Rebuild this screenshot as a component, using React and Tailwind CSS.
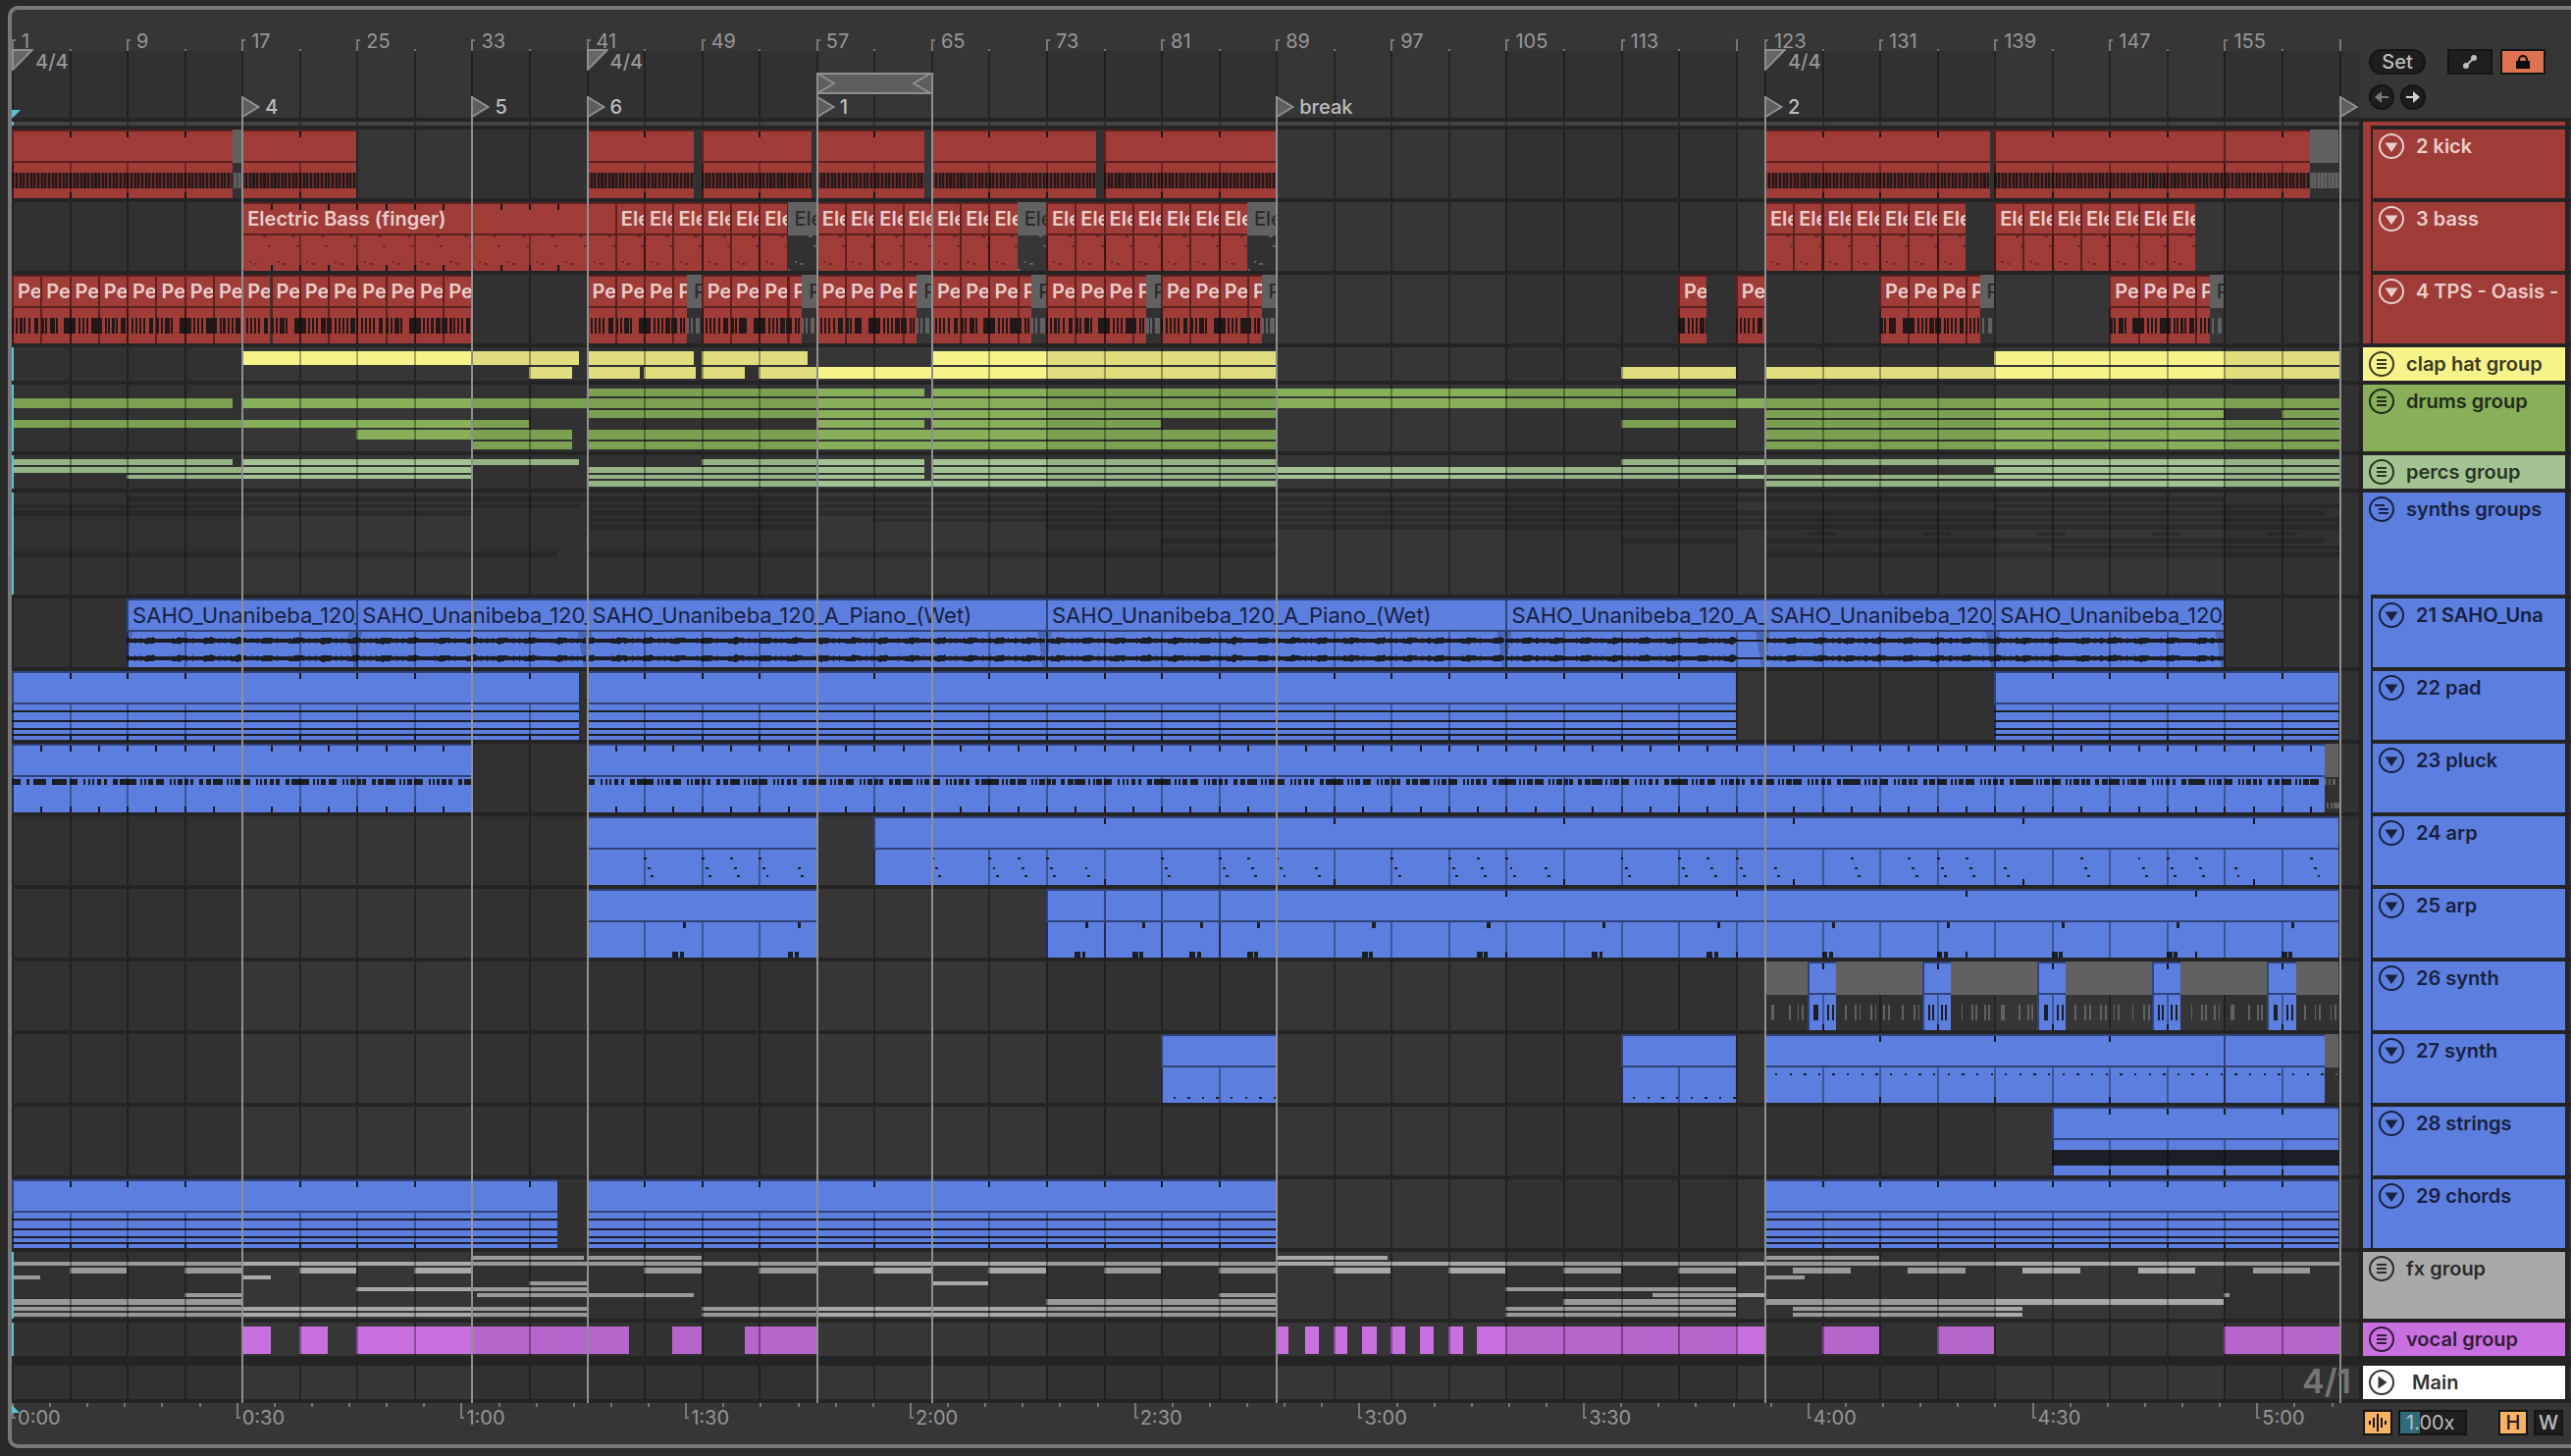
import React from 'react';

const SPAN = 163.4;
const ROW_WIDTH = 'w-[216px]';

const pct = (bars) => `${(bars / SPAN) * 100}%`;
const at = (bar) => pct(bar - 1);

const range = (from, to, step) => {
	const out = [];
	for (let i = from; i < to; i += step) out.push(i);
	return out;
};

const GRID_BARS = [...range(1, 122, 4), ...range(123, 164, 4)];
const DARK_BANDS = [[1, 17], [33, 57], [73, 89], [105, 121], [123, 139], [155, 164.4]];

const RULER_TICKS = [
	...range(1, 114, 8).map((bar) => ({ bar, label: bar })),
	{ bar: 121 },
	...range(123, 156, 8).map((bar) => ({ bar, label: bar })),
	{ bar: 163 },
];

const TIME_SIGNATURES = [1, 41, 123];

const LOCATORS = [
	{ bar: 17, label: '4' },
	{ bar: 33, label: '5' },
	{ bar: 41, label: '6' },
	{ bar: 57, label: '1' },
	{ bar: 89, label: 'break' },
	{ bar: 123, label: '2' },
	{ bar: 163, label: '' },
];

const COLORS = {
	red: { bg: 'bg-[#a03c38]', edge: 'border-[#5c2020]', text: 'text-[#e8cdcb]', note: '#231818', fill: '#a03c38' },
	blue: { bg: 'bg-[#5c7edf]', edge: 'border-[#2f437a]', text: 'text-[#172140]', note: '#1c1e26', fill: '#5c7edf' },
	yellow: { bg: 'bg-[#f7f38b]', text: 'text-[#3b3a22]', fill: '#f7f38b' },
	green: { bg: 'bg-[#88b05b]', text: 'text-[#212b16]', fill: '#88b05b' },
	sage: { bg: 'bg-[#a3c492]', text: 'text-[#2a3326]', fill: '#a3c492' },
	gray: { bg: 'bg-[#a9a9a9]', text: 'text-[#2b2b2b]', fill: '#a9a9a9' },
	violet: { bg: 'bg-[#c970e0]', text: 'text-[#331c39]', fill: '#c970e0' },
	shade: { fill: '#2c2c2c' },
};

const clip = (from, to, name = '', loop = 0, muted = false) => ({ from, to, name, loop, muted });
const chain = (from, to, name) => range(from, to, 2).map((bar) => clip(bar, Math.min(bar + 2, to), name));

// note: [bar, length, y, height]
const repeat = (pattern, from, to, period) =>
	range(from, to, period).flatMap((start) => pattern.map(([x, w, y, h]) => [start + x, w, y, h]));

const KICK_NOTES = repeat([[0.02, 0.14, 44, 16]], 1, 163, 0.25);

const BASS_NOTES = repeat(
	[[1.5, 0.26, 34, 2], [1.8, 0.2, 44, 2], [0.5, 0.14, 60, 2], [0.85, 0.26, 62, 2], [0.05, 0.14, 68, 2]],
	1, 163, 2
);

const PERC_NOTES = repeat(
	[
		[0, 0.14], [0.3, 0.14], [0.58, 0.14], [0.85, 0.14], [1.15, 0.14], [1.55, 0.3],
		[2.05, 0.2], [2.35, 0.14], [2.65, 0.35], [3.05, 0.14], [3.65, 0.82], [4.65, 0.14],
		[4.92, 0.14], [5.2, 0.14], [5.5, 0.35], [5.9, 0.4], [6.5, 0.14], [6.72, 0.14],
		[7, 0.14], [7.27, 0.14], [7.6, 0.3],
	].map(([x, w]) => [x, w, 44, 16]),
	1, 163, 8
);

const PLUCK_NOTES = [
	...repeat([[0, 0.6], [1, 0.2], [1.5, 0.9], [2.8, 1]].map(([x, w]) => [x, w, 36, 6]), 1, 5, 4),
	...repeat(
		[
			[0, 0.6], [1, 0.14], [1.3, 0.14], [1.57, 0.2], [1.95, 0.3], [2.4, 0.24], [3.05, 0.3], [3.5, 1.2],
			[4.95, 0.14], [5.22, 0.14], [5.5, 0.35], [6.05, 0.56], [7, 0.14], [7.27, 0.14], [7.55, 0.35],
			[8.05, 0.26], [8.4, 0.26], [9.05, 0.28], [9.5, 0.4], [10, 0.7], [10.95, 0.14], [11.25, 0.14], [11.5, 0.4],
		].map(([x, w]) => [x, w, 36, 6]),
		5, 162, 12
	),
	[162.15, 0.14, 60, 6], [162.4, 0.14, 60, 6], [162.65, 0.35, 60, 6],
];

const arpFigure = (x) => [[x, 0.2, 42, 2], [x + 0.28, 0.2, 52, 2], [x + 0.5, 0.2, 60, 2]];
const ARP_PATTERN = [
	...arpFigure(4), ...arpFigure(8), ...arpFigure(10), ...arpFigure(12),
	[14.7, 0.2, 52, 2], [14.9, 0.2, 60, 2],
];
const ARP24_NOTES = [...repeat(ARP_PATTERN, 41, 57, 16), ...repeat(ARP_PATTERN, 61, 163, 16)];

const stab = (x) => [[x, 0.4, 64, 6], [x + 0.5, 0.26, 64, 6], [x + 0.7, 0.22, 34, 6]];
const ARP25_NOTES = [47, 55, 75, 79, 83, 87, ...range(95, 163, 8)].flatMap(stab);

const SYNTH26_NOTES = repeat(
	[
		[0.45, 0.26], [1.7, 0.12], [2.3, 0.12], [2.6, 0.12], [3.45, 0.28], [4.35, 0.14], [4.7, 0.14],
		[5.6, 0.12], [6.3, 0.12], [6.6, 0.12], [7.4, 0.12], [7.7, 0.12], [8.3, 0.12], [8.6, 0.12],
		[9.6, 0.12], [10.4, 0.12], [10.7, 0.12], [11.4, 0.14], [11.7, 0.14], [12.3, 0.14], [12.6, 0.14],
		[13.7, 0.12], [14.4, 0.12], [14.7, 0.12], [15.3, 0.12], [15.6, 0.12],
	].map(([x, w]) => [x, w, 44, 16]),
	123, 163, 16
);

const SYNTH27_NOTES = [
	...repeat([[0.85, 0.16, 64, 2]], 81, 89, 1),
	...repeat([[0.85, 0.16, 64, 2]], 113, 121, 1),
	...repeat([[0.75, 0.16, 40, 2]], 123, 163, 1),
];

const CHORD_LINES = [40, 50, 58, 64].map((y) => [1, 163, y, 2]);

// seven bars of percussion, then one muted bar
const percPhrase = (b) => [...chain(b, b + 6, 'Pe'), clip(b + 6, b + 7, 'P'), clip(b + 7, b + 8, 'P', 0, true)];

const TRACKS = [
	{
		name: '2 kick', color: 'red', kind: 'midi', notes: KICK_NOTES, band: true,
		clips: [
			clip(1, 16.4, '', 4), clip(16.4, 17, '', 0, true), clip(17, 25, '', 4), clip(41, 48.5, '', 4),
			clip(49, 56.7, '', 4), clip(57, 64.5, '', 4), clip(65, 76.5, '', 4), clip(77, 89, '', 4),
			clip(123, 138.7, '', 4), clip(139, 155, '', 4), clip(155, 161, '', 4), clip(161, 163, '', 0, true),
		],
	},
	{
		name: '3 bass', color: 'red', kind: 'midi', notes: BASS_NOTES, noteColor: '#6b2a29',
		clips: [
			clip(17, 43, 'Electric Bass (finger)', 2), ...chain(43, 55, 'Ele'), clip(55, 57, 'Ele', 0, true),
			...chain(57, 71, 'Ele'), clip(71, 73, 'Ele', 0, true), ...chain(73, 87, 'Ele'), clip(87, 89, 'Ele', 0, true),
			...chain(123, 137, 'Ele'), ...chain(139, 153, 'Ele'),
		],
	},
	{
		name: '4 TPS - Oasis -', color: 'red', kind: 'midi', notes: PERC_NOTES,
		clips: [
			...chain(1, 33, 'Pe'), ...[41, 49, 57, 65, 73, 81].flatMap(percPhrase),
			clip(117, 119, 'Pe'), clip(121, 123, 'Pe'), ...[131, 147].flatMap(percPhrase),
		],
	},
	{
		name: 'clap hat group', color: 'yellow', kind: 'group', height: 'h-[34px]', size: 34,
		rows: [
			[4, 14, [[17, 40.5], [41, 48.5], [49, 56.4], [65, 89], [139, 163]]],
			[20, 12, [[37, 40], [41, 44.7], [45, 48.6], [49, 52], [53, 89], [113, 121], [123, 163]]],
		],
	},
	{
		name: 'drums group', color: 'green', kind: 'group', height: 'h-[68px]', size: 68,
		rows: [
			[4, 8, [[41, 64.5], [65, 121]]],
			[14, 10, [[1, 16.4], [17, 163]]],
			[26, 8, [[41, 89], [123, 155], [159, 163]]],
			[36, 8, [[1, 37], [57, 64.5], [65, 81], [113, 121], [123, 163]]],
			[46, 10, [[25, 40], [41, 89], [123, 163]]],
			[58, 8, [[33, 40], [41, 89], [123, 163]]],
		],
	},
	{
		name: 'percs group', color: 'sage', kind: 'group', height: 'h-[34px]', size: 34,
		rows: [
			[4, 6, [[1, 16.4], [17, 40.5], [49, 64.5], [65, 89], [113, 163]]],
			[12, 6, [[1, 33], [41, 64.5], [65, 121], [139, 163]]],
			[20, 4, [[9, 33], [41, 64.5], [65, 163]]],
			[26, 6, [[41, 89], [123, 163]]],
		],
	},
	{
		name: 'synths groups', color: 'blue', rowColor: 'shade', kind: 'group', open: true, height: 'h-[104px]', size: 104,
		rows: [
			[4, 6, [[9, 155]]],
			[12, 4, [[1, 40.5], [41, 121], [139, 163]]],
			[18, 6, [[1, 33], [41, 162]]],
			[26, 4, [[41, 57], [61, 163]]],
			[32, 6, [[41, 57], [73, 163]]],
			[40, 4, [[126, 128], [134, 136], [142, 144], [150, 152], [158, 160]]],
			[46, 6, [[81, 89], [113, 121], [123, 162]]],
			[54, 4, [[143, 163]]],
			[60, 6, [[1, 39], [41, 89], [123, 163]]],
		],
	},
	{
		name: '21 SAHO_Una', color: 'blue', kind: 'audio',
		clips: [
			clip(9, 25, 'SAHO_Unanibeba_120_'),
			clip(25, 41, 'SAHO_Unanibeba_120_'),
			clip(41, 73, 'SAHO_Unanibeba_120_A_Piano_(Wet)'),
			clip(73, 105, 'SAHO_Unanibeba_120_A_Piano_(Wet)'),
			clip(105, 123, 'SAHO_Unanibeba_120_A_'),
			clip(123, 139, 'SAHO_Unanibeba_120_'),
			clip(139, 155, 'SAHO_Unanibeba_120_'),
		],
	},
	{
		name: '22 pad', color: 'blue', kind: 'midi', notes: CHORD_LINES,
		clips: [clip(1, 40.5, '', 4), clip(41, 121, '', 4), clip(139, 163, '', 4)],
	},
	{
		name: '23 pluck', color: 'blue', kind: 'midi', notes: PLUCK_NOTES,
		clips: [clip(1, 33, '', 2), clip(41, 162, '', 2), clip(162, 163, '', 0, true)],
	},
	{ name: '24 arp', color: 'blue', kind: 'midi', notes: ARP24_NOTES, clips: [clip(41, 57, '', 16), clip(61, 163, '', 16)] },
	{
		name: '25 arp', color: 'blue', kind: 'midi', notes: ARP25_NOTES,
		clips: [clip(41, 57), clip(73, 77), clip(77, 81), clip(81, 85), clip(85, 89), clip(89, 163, '', 16)],
	},
	{
		name: '26 synth', color: 'blue', kind: 'midi', notes: SYNTH26_NOTES,
		clips: [
			clip(123, 126, '', 0, true),
			...[126, 134, 142, 150, 158].flatMap((b) => [clip(b, b + 2, '', 1), clip(b + 2, Math.min(b + 8, 163), '', 0, true)]),
		],
	},
	{
		name: '27 synth', color: 'blue', kind: 'midi', notes: SYNTH27_NOTES,
		clips: [clip(81, 89), clip(113, 121), clip(123, 155, '', 8), clip(155, 162), clip(162, 163, '', 0, true)],
	},
	{ name: '28 strings', color: 'blue', kind: 'midi', notes: [[1, 163, 44, 16]], clips: [clip(143, 163, '', 4)] },
	{
		name: '29 chords', color: 'blue', kind: 'midi', notes: CHORD_LINES,
		clips: [clip(1, 39, '', 4), clip(41, 89, '', 4), clip(123, 163, '', 4)],
	},
	{
		name: 'fx group', color: 'gray', kind: 'group', height: 'h-[68px]', size: 68,
		rows: [
			[4, 4, [[33, 40.8], [41, 49], [89, 96.8], [123, 131]]],
			[10, 4, [[1, 163]]],
			[16, 6, [5, 13, 21, 29, 45, 53, 61, 69, 77, 85, 93, 101, 109, 117, 125, 133, 141, 149, 157].map((b) => [b, b + 4])],
			[24, 4, [[1, 3], [17, 19], [123, 125.8]]],
			[30, 4, [[37, 41], [65, 69]]],
			[36, 4, [[25, 41], [105, 121]]],
			[42, 4, [[13, 17], [33.4, 48.5], [85, 89], [115.2, 123], [155, 155.4]]],
			[48, 6, [[1, 17], [73, 89], [109, 121], [123, 155]]],
			[56, 4, [[1, 41], [49, 89], [105, 121], [125, 141]]],
			[62, 4, [[1, 41], [49, 89], [105, 121], [125, 141]]],
		],
	},
	{
		name: 'vocal group', color: 'violet', kind: 'group', height: 'h-[34px]', size: 34,
		rows: [
			[4, 28, [
				[17, 19], [21, 23], [25, 44], [47, 49], [52, 57], [89, 89.9], [91, 92], [93, 94], [95, 96],
				[97, 98], [99, 100], [101, 102], [103, 123], [127, 131], [135, 139], [155, 163],
			]],
		],
	},
];

const rectPath = (rects) => rects.map(([x, w, y, h]) => `M${x - 1} ${y}h${w}v${h}h${-w}z`).join('');

const Plot = ({ size = 70, children }) => (
	<svg
		className="pointer-events-none absolute inset-0 h-full w-full"
		viewBox={`0 0 ${SPAN} ${size}`}
		preserveAspectRatio="none"
		shapeRendering="crispEdges"
		aria-hidden="true"
	>
		{children}
	</svg>
);

const Zebra = ({ size = 70 }) => (
	<path d={rectPath(DARK_BANDS.map(([a, b]) => [a, b - a, 0, size]))} fill="#000" fillOpacity="0.09" />
);

const GridLines = ({ size = 70 }) => (
	<path d={rectPath(GRID_BARS.map((b) => [b, 0.137, 0, size]))} fill="#000" fillOpacity="0.33" />
);

const wavePath = (from, to, mid) => {
	const xs = range(from, to, 0.14);
	const amp = (x, k) => {
		if (x > 121 && x < 123) return 1;
		const hit = Math.max(0, Math.sin((x * Math.PI) / 1.02 + k));
		return 2 + hit * hit * 1.2 + (Math.sin(x * 31) > 0.5 ? 0.6 : 0);
	};
	const top = xs.map((x) => `L${(x - 1).toFixed(2)} ${(mid - amp(x, 0)).toFixed(1)}`).join('');
	const bottom = xs.reverse().map((x) => `L${(x - 1).toFixed(2)} ${(mid + amp(x, 0.6)).toFixed(1)}`).join('');
	return `M${from - 1} ${mid}${top}${bottom}z`;
};

const clipNotes = (notes, clips) =>
	clips.flatMap(({ from, to }) =>
		notes
			.filter(([x, w]) => x < to - 0.05 && x + w > from + 0.05)
			.map(([x, w, y, h]) => {
				const start = Math.max(x, from);
				return [start, Math.min(x + w, to) - start, y, h];
			})
	);

const ClipLane = ({ track }) => {
	const color = COLORS[track.color];
	const live = track.clips.filter((c) => !c.muted);
	const muted = track.clips.filter((c) => c.muted);
	const notes = track.notes || [];
	const loops = live.flatMap((c) => (c.loop ? range(c.from + c.loop, c.to - 0.1, c.loop) : []));

	return (
		<div className="relative h-[70px] overflow-hidden bg-[#363636]">
			<Plot><Zebra /></Plot>
			{live.map((c) => (
				<div
					key={c.from}
					className={`absolute inset-y-0 border-l-2 ${color.bg} ${color.edge}`}
					style={{ left: at(c.from), width: pct(c.to - c.from) }}
				/>
			))}
			<Plot>
				{track.band ? (
					<>
						<path d={rectPath(live.map((c) => [c.from, c.to - c.from, 44, 16]))} fill={color.note} fillOpacity="0.5" />
						<path d={rectPath(muted.map((c) => [c.from, c.to - c.from, 44, 16]))} fill="#4c4c4c" />
					</>
				) : null}
				<path d={rectPath(clipNotes(notes, live))} fill={track.noteColor || color.note} />
				<path d={rectPath(clipNotes(notes, muted))} fill="#616161" />
				{track.kind === 'audio' ? live.map((c) => (
					<React.Fragment key={c.from}>
						<path d={`M${c.from - 1} 34h0.4L${c.from - 1} 70zM${c.to - 1} 34h-0.6L${c.to - 1.2} 70h0.2z`} fill="#2f437a" fillOpacity="0.4" />
						<path d={wavePath(c.from, c.to, 43)} fill={color.note} />
						<path d={wavePath(c.from, c.to, 61)} fill={color.note} />
					</React.Fragment>
				)) : null}
				<GridLines />
			</Plot>
			{track.clips.map((c) => (
				<div
					key={c.from}
					className={`absolute top-0 flex h-[34px] items-center overflow-hidden whitespace-nowrap ${
						c.muted
							? 'bg-[#616161] pl-[7px] text-[20px] font-medium text-[#2b2b2b]'
							: `border-y-2 border-l-2 pl-1 ${color.bg} ${color.edge} ${color.text} ${track.kind === 'audio' ? 'text-[22px] font-normal' : 'text-[20px] font-semibold'}`
					}`}
					style={{ left: at(c.from), width: pct(c.to - c.from) }}
				>
					{c.name}
				</div>
			))}
			<Plot>
				<path d={rectPath(loops.flatMap((b) => [[b, 0.137, 2, 6], [b, 0.137, 64, 6]]))} fill="#17181c" />
			</Plot>
		</div>
	);
};

const GroupLane = ({ track }) => (
	<div className={`relative overflow-hidden bg-[#363636] ${track.height}`}>
		<Plot size={track.size}>
			{track.rows.map(([y, h, spans]) => (
				<path
					key={y}
					d={rectPath(spans.map(([a, b]) => [a, b - a, y, h]))}
					fill={COLORS[track.rowColor || track.color].fill}
				/>
			))}
			<Zebra size={track.size} />
			<GridLines size={track.size} />
		</Plot>
		<div className="absolute inset-y-0 left-0 w-0.5 bg-[#56c3d6]" />
	</div>
);

const FoldButton = ({ kind, label }) => (
	<button type="button" aria-label={`Fold ${label}`} className="size-[26px] shrink-0">
		<svg viewBox="0 0 26 26" className="size-[26px]" fill="none" stroke="currentColor" strokeWidth="2">
			<circle cx="13" cy="13" r="12" />
			{kind === 'clip' ? <path d="M6.5 9.5h13L13 19z" fill="currentColor" stroke="none" /> : null}
			{kind === 'group' ? <path d="M8 9h10M8 13h10M8 17h10" /> : null}
			{kind === 'open' ? <path d="M6 9h10M10 13h10M10 17h10" /> : null}
			{kind === 'main' ? <path d="M9.5 6.5v13l9-6.5z" fill="currentColor" stroke="none" /> : null}
		</svg>
	</button>
);

const TrackHeader = ({ track }) => {
	const color = COLORS[track.color];
	const group = track.kind === 'group';
	return (
		<div className={`flex pl-1 ${ROW_WIDTH}`}>
			{group ? null : <div className={`mr-0.5 w-2 shrink-0 ${color.bg}`} />}
			<div className={`mt-1 flex flex-1 items-start gap-3 overflow-hidden pl-1.5 pt-1 text-[20px] leading-[26px] font-semibold whitespace-nowrap ${color.bg} ${color.text}`}>
				<FoldButton kind={group ? (track.open ? 'open' : 'group') : 'clip'} label={track.name} />
				<span>{track.name}</span>
			</div>
			<div className="mt-1 ml-1 w-0.5 bg-[#323232]" />
		</div>
	);
};

const TrackRow = ({ track }) => (
	<div className="flex">
		<div className="min-w-0 flex-1 pt-1">
			{track.kind === 'group' ? <GroupLane track={track} /> : <ClipLane track={track} />}
		</div>
		<TrackHeader track={track} />
	</div>
);

const BarRuler = () => (
	<div className="relative min-w-0 flex-1 pt-[42px]">
		<div className="relative h-[68px]">
			<Plot size={68}>
				<Zebra size={68} />
				<GridLines size={68} />
			</Plot>
		</div>
		{GRID_BARS.map((bar) => (
			<div key={bar} className="absolute top-10 h-0.5 w-0.5 bg-[#787878]" style={{ left: at(bar) }} />
		))}
		{RULER_TICKS.map(({ bar, label }) => (
			<div key={bar} className="absolute top-[30px]" style={{ left: at(bar) }}>
				<div className={`h-3 border-l-2 border-[#787878] ${label ? 'w-1 border-t-2' : 'w-0.5'}`} />
				{label ? (
					<span className="absolute bottom-0 left-[10px] text-[20px] leading-5 text-[#969696]">{label}</span>
				) : null}
			</div>
		))}
		{TIME_SIGNATURES.map((bar) => (
			<div key={bar} className="absolute top-10 flex gap-0.5" style={{ left: at(bar) }}>
				<svg width="22" height="22" viewBox="0 0 22 22">
					<path d="M1 1h19.5L1 21z" fill="#666" stroke="#8f8f8f" strokeWidth="2" />
				</svg>
				<span className="pt-[3px] text-[20px] leading-5 font-medium text-[#969696]">4/4</span>
			</div>
		))}
	</div>
);

const ArrangementControls = () => (
	<div className={`pt-10 pl-[10px] ${ROW_WIDTH}`}>
		<div className="flex items-center">
			<button type="button" className="h-[26px] w-[58px] rounded-full border-2 border-[#141414] bg-[#1e1e1e] text-[20px] leading-5 font-medium text-[#bdbdbd]">
				Set
			</button>
			<button type="button" aria-label="Automation mode" className="ml-[22px] flex h-[26px] w-[46px] items-center justify-center border-2 border-[#141414] bg-[#1e1e1e]">
				<svg width="14" height="14" viewBox="0 0 14 14" fill="#bdbdbd">
					<circle cx="3" cy="11" r="3" />
					<circle cx="11" cy="3" r="3" />
					<path d="M3 11l8-8" stroke="#bdbdbd" strokeWidth="2" />
				</svg>
			</button>
			<button type="button" aria-label="Lock envelopes" className="ml-2 flex h-[26px] w-[46px] items-center justify-center border-2 border-[#141414] bg-[#dc7250]">
				<svg width="14" height="14" viewBox="0 0 14 14">
					<rect y="6" width="14" height="8" fill="#0c0c0c" />
					<path d="M3 7V5a4 4 0 018 0v2" fill="none" stroke="#0c0c0c" strokeWidth="2" />
				</svg>
			</button>
		</div>
		<div className="mt-[10px] flex gap-1.5">
			<button type="button" aria-label="Previous locator" className="flex size-[26px] items-center justify-center rounded-full border-2 border-[#141414] bg-[#1e1e1e] text-[#7a7a7a]">
				<svg width="14" height="12" viewBox="0 0 14 12" fill="currentColor">
					<path d="M0 6l7-6v5h7v2H7v5z" />
				</svg>
			</button>
			<button type="button" aria-label="Next locator" className="flex size-[26px] items-center justify-center rounded-full border-2 border-[#141414] bg-[#1e1e1e] text-[#d0d0d0]">
				<svg width="14" height="12" viewBox="0 0 14 12" fill="currentColor">
					<path d="M14 6L7 0v5H0v2h7v5z" />
				</svg>
			</button>
		</div>
	</div>
);

const MarkerOverlay = () => (
	<div className="pointer-events-none absolute top-16 right-[216px] bottom-[42px] left-0">
		<div className="absolute top-0 h-[22px] border-y-2 border-[#8f8f8f] bg-[#5e5e5e]" style={{ left: at(57), width: pct(8) }}>
			<svg className="absolute -top-0.5 left-0" width="20" height="22" viewBox="0 0 20 22">
				<path d="M1 1l17 10L1 21" fill="none" stroke="#8f8f8f" strokeWidth="2" />
			</svg>
			<svg className="absolute -top-0.5 right-0" width="20" height="22" viewBox="0 0 20 22">
				<path d="M19 1L2 11l17 10" fill="none" stroke="#8f8f8f" strokeWidth="2" />
			</svg>
		</div>
		{[57, 65].map((bar) => (
			<div key={bar} className="absolute inset-y-0 w-0.5 bg-[#8f8f8f]" style={{ left: at(bar) }} />
		))}
		{LOCATORS.map(({ bar, label }) => (
			<div key={bar} className="absolute top-6 bottom-0 w-0.5 bg-[#8f8f8f]" style={{ left: at(bar) }}>
				<div className="absolute top-0 left-0 flex h-[22px] items-center gap-[5px] whitespace-nowrap text-[20px] leading-5 font-medium text-[#bdbdbd]">
					<svg width="19" height="22" viewBox="0 0 19 22">
						<path d="M1 1l16.5 10L1 21z" fill="#5e5e5e" stroke="#8f8f8f" strokeWidth="2" />
					</svg>
					{label}
				</div>
			</div>
		))}
		<svg className="absolute top-[38px] left-0" width="9" height="8" viewBox="0 0 9 8">
			<path d="M0 0h9L1 8H0z" fill="#56c3d6" />
		</svg>
	</div>
);

const OverviewRow = () => (
	<div className="flex">
		<div className="min-w-0 flex-1 pt-1">
			<div className="relative h-1 bg-[#424242]">
				<Plot size={4}>
					<GridLines size={4} />
				</Plot>
				<div className="absolute inset-y-0 left-0 w-0.5 bg-[#56c3d6]" />
			</div>
		</div>
		<div className={`flex pt-1 pl-1 ${ROW_WIDTH}`}>
			<div className="flex-1 bg-[#a03c38]" />
			<div className="ml-1 w-0.5 bg-[#323232]" />
		</div>
	</div>
);

const MainRow = () => (
	<div className="flex pt-[10px] pb-1">
		<div className="relative h-[34px] min-w-0 flex-1 bg-[#363636]">
			<Plot size={34}>
				<Zebra size={34} />
				<GridLines size={34} />
			</Plot>
			<span className="absolute right-2 top-0 z-10 text-[34px] leading-8 font-semibold text-[#757575]">4/1</span>
		</div>
		<div className={`flex pl-1 ${ROW_WIDTH}`}>
			<div className="flex flex-1 items-start gap-[18px] bg-white pt-1 pl-1.5 text-[20px] leading-[26px] font-semibold text-[#333]">
				<FoldButton kind="main" label="Main" />
				<span>Main</span>
			</div>
			<div className="ml-1 w-0.5 bg-[#323232]" />
		</div>
	</div>
);

const TimeRuler = () => (
	<div className="relative min-w-0 flex-1">
		{range(0, 63, 1).map((i) => {
			const seconds = i * 5;
			const major = seconds % 30 === 0;
			return (
				<div key={i} className="absolute top-0" style={{ left: pct((seconds / 30) * 15.625) }}>
					<div className={`border-l-2 border-[#787878] ${major ? 'h-4 w-1 border-b-2' : 'h-1 w-0.5'}`} />
					{major ? (
						<span className="absolute top-[5px] left-1.5 text-[20px] leading-5 text-[#969696]">
							{Math.floor(seconds / 60)}:{String(seconds % 60).padStart(2, '0')}
						</span>
					) : null}
				</div>
			);
		})}
		<svg className="absolute top-0.5 left-0" width="8" height="8" viewBox="0 0 8 8">
			<path d="M0 0l8 8H0z" fill="#56c3d6" />
		</svg>
	</div>
);

const ZoomControls = () => (
	<div className={`flex items-start pt-[7px] pl-1 ${ROW_WIDTH}`}>
		<button type="button" aria-label="Waveform zoom" className="flex h-[26px] w-[30px] items-center justify-center border-2 border-[#141414] bg-[#f7b264]">
			<svg width="20" height="18" viewBox="0 0 20 18" stroke="#141414" strokeWidth="2">
				<path d="M2 7v4M6 4v10M10 0v18M14 4v10M18 7v4" />
			</svg>
		</button>
		<input
			type="text"
			aria-label="Waveform vertical zoom"
			defaultValue="1.00x"
			className="ml-1.5 h-[26px] w-[70px] border-2 border-[#141414] bg-[linear-gradient(to_right,#2f6b7a_20px,#1e1e1e_20px)] pl-1.5 text-[20px] leading-5 text-[#bdbdbd]"
		/>
		<button type="button" className="ml-8 h-[26px] w-[30px] border-2 border-[#141414] bg-[#f7b264] text-[20px] leading-5 font-medium text-[#1e1e1e]">
			H
		</button>
		<button type="button" className="ml-1.5 h-[26px] w-[30px] border-2 border-[#141414] bg-[#1e1e1e] text-[20px] leading-5 font-medium text-[#bdbdbd]">
			W
		</button>
	</div>
);

const App = () => (
	<div className="min-h-screen bg-[#292929] pt-1.5 pb-2 pl-2 font-['Inter',sans-serif]">
		<main className="relative rounded-l-[10px] border-4 border-r-0 border-[#787878] bg-[#363636]">
			<div className="flex">
				<BarRuler />
				<ArrangementControls />
			</div>
			<div className="bg-[#242424]">
				<OverviewRow />
				{TRACKS.map((track) => (
					<TrackRow key={track.name} track={track} />
				))}
				<MainRow />
			</div>
			<div className="flex h-[42px]">
				<TimeRuler />
				<ZoomControls />
			</div>
			<MarkerOverlay />
		</main>
	</div>
);

export default App;
